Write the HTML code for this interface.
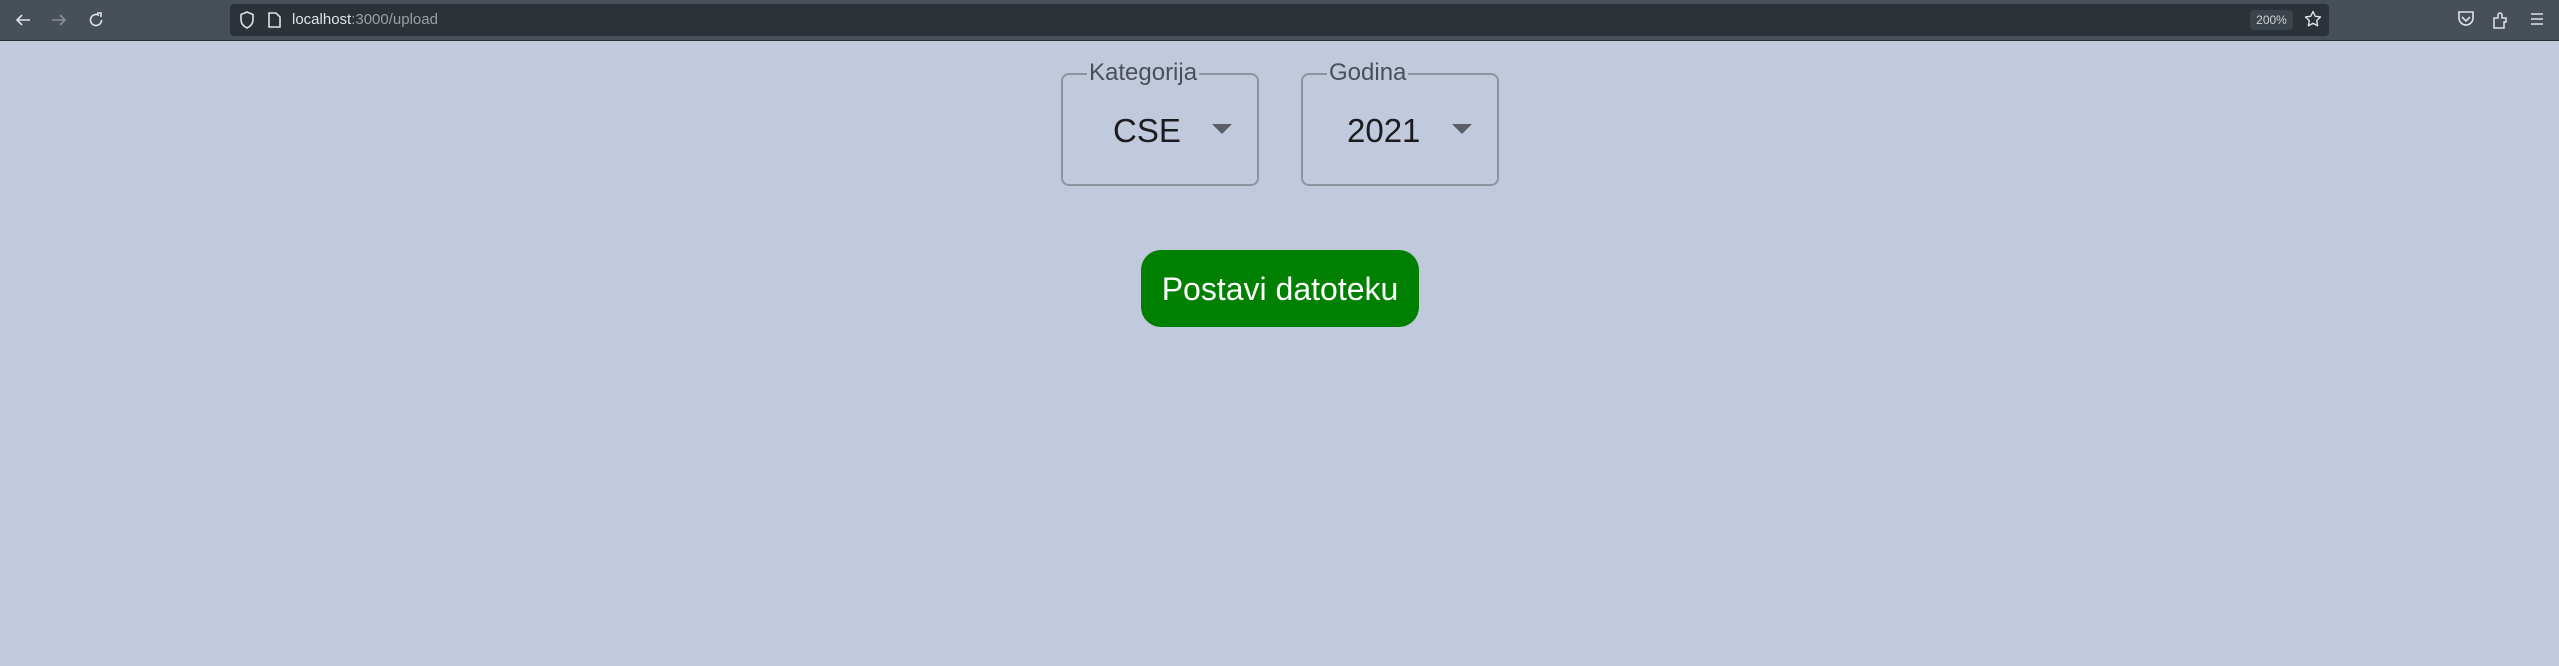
<!DOCTYPE html>
<html><head><style>
body{margin:0;width:2559px;height:666px;background:#c1cadc;font-family:"Liberation Sans",sans-serif;position:relative;overflow:hidden}
.tb{position:absolute;left:0;top:0;width:2559px;height:40px;background:#474f58;border-bottom:1px solid #2a2f35}
.url{position:absolute;left:230px;top:4px;width:2099px;height:32px;background:#2b3238;border-radius:4px}
.a{position:absolute;color:#e0e3e6}
.box{position:absolute;top:73px;height:113px;border:2px solid #8d94a0;border-radius:8px;box-sizing:border-box}
.lab{position:absolute;top:-15px;background:#c1cadc;color:#4a4f5a;font-size:24px;padding:0 2px;line-height:26px}
.val{position:absolute;top:37px;font-size:33px;color:#1c1c20}
.arr{position:absolute;top:49px;width:0;height:0;border-left:10px solid transparent;border-right:10px solid transparent;border-top:10px solid #5b5e66}
.btn{position:absolute;left:1141px;top:250px;width:278px;height:77px;background:#008000;border-radius:20px;color:#fff;font-size:32px;text-align:center;line-height:78px}
</style></head><body>
<div class="tb">
<svg style="position:absolute;left:15px;top:12px" width="16" height="16" viewBox="0 0 16 16"><path d="M15 8H2M7 3L2 8l5 5" fill="none" stroke="#e0e3e6" stroke-width="1.6"/></svg>
<svg style="position:absolute;left:51px;top:12px" width="16" height="16" viewBox="0 0 16 16"><path d="M1 8h13M9 3l5 5-5 5" fill="none" stroke="#8a9096" stroke-width="1.6"/></svg>
<svg style="position:absolute;left:88px;top:12px" width="16" height="16" viewBox="0 0 16 16"><path d="M13.5 8A5.5 5.5 0 1 1 11 3.4M9 1h4v4" fill="none" stroke="#e0e3e6" stroke-width="1.6"/></svg>
<div class="url">
<svg style="position:absolute;left:9px;top:7px" width="16" height="18" viewBox="0 0 16 18"><path d="M8 1L2 3.5V9c0 4 3 6.5 6 8 3-1.5 6-4 6-8V3.5z" fill="none" stroke="#e0e3e6" stroke-width="1.6"/></svg>
<svg style="position:absolute;left:38px;top:8px" width="13" height="16" viewBox="0 0 13 16"><path d="M1 1h7l4 4v10H1z" fill="none" stroke="#e0e3e6" stroke-width="1.6"/></svg>
<div class="a" style="left:62px;top:7px;font-size:15px">localhost<span style="color:#9aa0a6">:3000/upload</span></div>
<div style="position:absolute;left:2020px;top:6px;width:43px;height:20px;background:#3c444b;border-radius:4px;color:#cfd3d7;font-size:12px;text-align:center;line-height:20px">200%</div>
<svg style="position:absolute;left:2074px;top:6px" width="18" height="18" viewBox="0 0 18 18"><path d="M9 1.5l2.3 4.8 5.2.7-3.8 3.6.9 5.2L9 13.3l-4.6 2.5.9-5.2L1.5 7l5.2-.7z" fill="none" stroke="#e0e3e6" stroke-width="1.4" stroke-linejoin="round"/></svg>
</div>
<svg style="position:absolute;left:2457px;top:11px" width="18" height="16" viewBox="0 0 18 16"><path d="M2 1h14v6c0 4-3.5 7-7 7S2 11 2 7z M5 6l4 4 4-4" fill="none" stroke="#e0e3e6" stroke-width="1.6"/></svg>
<svg style="position:absolute;left:2493px;top:10px" width="16" height="19" viewBox="0 0 16 19"><path d="M1 18V8h4V5a2 2 0 014 0v3h4v4h-2v6z" fill="none" stroke="#e0e3e6" stroke-width="1.5"/></svg>
<svg style="position:absolute;left:2530px;top:12px" width="14" height="14" viewBox="0 0 14 14"><path d="M1 2h12M1 7h12M1 12h12" stroke="#e0e3e6" stroke-width="1.6"/></svg>
</div>
<div class="box" style="left:1061px;width:198px"><div class="lab" style="left:24px">Kategorija</div><div class="val" style="left:50px">CSE</div><div class="arr" style="left:149px"></div></div>
<div class="box" style="left:1301px;width:198px"><div class="lab" style="left:24px">Godina</div><div class="val" style="left:44px">2021</div><div class="arr" style="left:149px"></div></div>
<div class="btn">Postavi datoteku</div>
</body></html>
